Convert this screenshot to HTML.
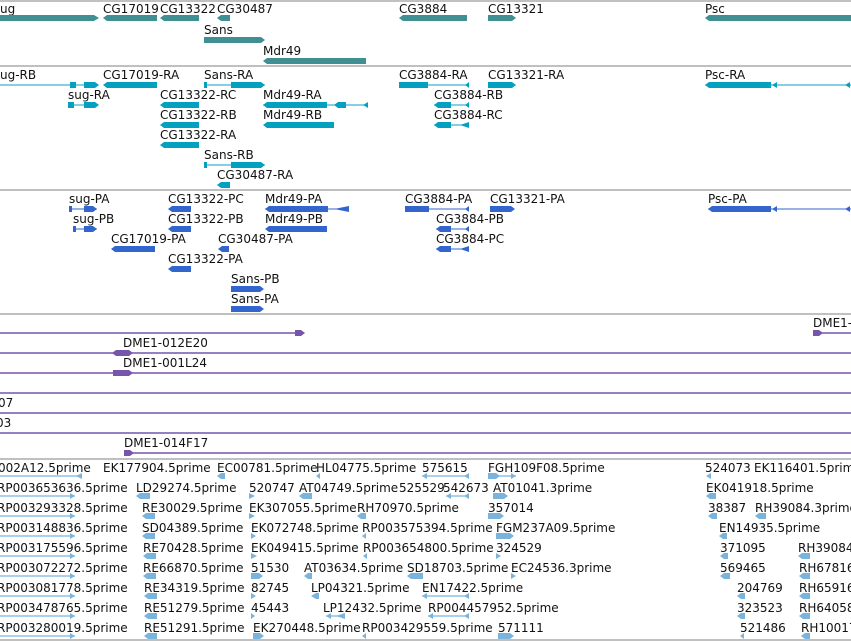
<!DOCTYPE html>
<html><head><meta charset="utf-8"><style>
html,body{margin:0;padding:0;background:#fff;width:851px;height:642px;overflow:hidden}
svg{display:block}
text{font-family:"DejaVu Sans","Liberation Sans",sans-serif;font-size:12px;fill:#111}
.g{fill:#3f8f93}.t{fill:#04a0c0}.p{fill:#3366cc}.v{fill:#7755aa}.e{fill:#7ab4dc}
.tl{stroke:#04a0c0;stroke-width:1}.pl{stroke:#3366cc;stroke-width:1}.vl{stroke:#7755aa;stroke-width:1.5}.el{stroke:#7ab4dc;stroke-width:1.3}
.sep{stroke:#c0c0c0;stroke-width:2}
</style></head><body>
<svg width="851" height="642" xmlns="http://www.w3.org/2000/svg">
<line class="sep" x1="0" y1="1" x2="851" y2="1"/>
<line class="sep" x1="0" y1="66" x2="851" y2="66"/>
<line class="sep" x1="0" y1="190" x2="851" y2="190"/>
<line class="sep" x1="0" y1="314" x2="851" y2="314"/>
<line class="sep" x1="0" y1="459" x2="851" y2="459"/>
<line class="sep" x1="0" y1="640" x2="851" y2="640"/>

<!-- Track 1 genes -->
<text x="0" y="13">ug</text><polygon class="g" points="0,15 94,15 99,18 94,21 0,21"/>
<text x="103" y="13">CG17019</text><polygon class="g" points="103,18 107,15 157,15 157,21 107,21"/>
<text x="160" y="13">CG13322</text><polygon class="g" points="160,18 164,15 199,15 199,21 164,21"/>
<text x="217" y="13">CG30487</text><polygon class="g" points="217,18 221,15 230,15 230,21 221,21"/>
<text x="204" y="34">Sans</text><polygon class="g" points="204,37 261,37 265,40 261,43 204,43"/>
<text x="263" y="55">Mdr49</text><polygon class="g" points="263,61 267,58 366,58 366,64 267,64"/>
<text x="399" y="13">CG3884</text><polygon class="g" points="399,18 403,15 467,15 467,21 403,21"/>
<text x="488" y="13">CG13321</text><polygon class="g" points="488,15 512,15 516,18 512,21 488,21"/>
<text x="705" y="13">Psc</text><polygon class="g" points="705,18 709,15 851,15 851,21 709,21"/>

<!-- Track 2 transcripts -->
<text x="0" y="79">ug-RB</text><line class="tl" x1="0" y1="85" x2="98" y2="85"/><rect class="t" x="70" y="82" width="6" height="6"/><polygon class="t" points="84,82 95,82 99,85 95,88 84,88"/>
<text x="103" y="79">CG17019-RA</text><polygon class="t" points="103,85 107,82 157,82 157,88 107,88"/>
<text x="204" y="79">Sans-RA</text><line class="tl" x1="204" y1="85" x2="265" y2="85"/><rect class="t" x="204" y="82" width="3" height="6"/><polygon class="t" points="231,82 261,82 265,85 261,88 231,88"/>
<text x="399" y="79">CG3884-RA</text><line class="tl" x1="399" y1="85" x2="469" y2="85"/><rect class="t" x="399" y="82" width="29" height="6"/><polygon class="t" points="465,85 469,82 469,88"/>
<text x="488" y="79">CG13321-RA</text><polygon class="t" points="488,82 512,82 516,85 512,88 488,88"/>
<text x="705" y="79">Psc-RA</text><line class="tl" x1="705" y1="85" x2="851" y2="85"/><polygon class="t" points="705,85 709,82 771,82 771,88 709,88"/><polygon class="t" points="772,85 777,82 777,88"/><polygon class="t" points="845,85 850,82 850,88"/>

<text x="68" y="99">sug-RA</text><line class="tl" x1="68" y1="105" x2="98" y2="105"/><rect class="t" x="68" y="102" width="6" height="6"/><polygon class="t" points="84,102 95,102 99,105 95,108 84,108"/>
<text x="160" y="99">CG13322-RC</text><polygon class="t" points="160,105 164,102 199,102 199,108 164,108"/>
<text x="263" y="99">Mdr49-RA</text><line class="tl" x1="263" y1="105" x2="368" y2="105"/><polygon class="t" points="263,105 267,102 327,102 327,108 267,108"/><polygon class="t" points="334,105 338,102 346,102 346,108 338,108"/><polygon class="t" points="363,105 368,102 368,108"/>
<text x="434" y="99">CG3884-RB</text><line class="tl" x1="434" y1="105" x2="469" y2="105"/><polygon class="t" points="434,105 438,102 451,102 451,108 438,108"/><polygon class="t" points="465,105 469,102 469,108"/>

<text x="160" y="119">CG13322-RB</text><polygon class="t" points="160,125 164,122 199,122 199,128 164,128"/>
<text x="263" y="119">Mdr49-RB</text><polygon class="t" points="263,125 267,122 334,122 334,128 267,128"/>
<text x="434" y="119">CG3884-RC</text><line class="tl" x1="434" y1="125" x2="469" y2="125"/><polygon class="t" points="434,125 438,122 451,122 451,128 438,128"/><polygon class="t" points="460,125 469,122 469,128"/>
<text x="160" y="139">CG13322-RA</text><polygon class="t" points="160,145 164,142 199,142 199,148 164,148"/>
<text x="204" y="159">Sans-RB</text><line class="tl" x1="204" y1="165" x2="265" y2="165"/><rect class="t" x="204" y="162" width="3" height="6"/><polygon class="t" points="231,162 261,162 265,165 261,168 231,168"/>
<text x="217" y="179">CG30487-RA</text><polygon class="t" points="217,185 221,182 230,182 230,188 221,188"/>

<!-- Track 3 proteins -->
<text x="69" y="203">sug-PA</text><line class="pl" x1="69" y1="209" x2="97" y2="209"/><rect class="p" x="69" y="206" width="3" height="6"/><polygon class="p" points="84,206 93,206 97,209 93,212 84,212"/>
<text x="168" y="203">CG13322-PC</text><polygon class="p" points="168,209 172,206 191,206 191,212 172,212"/>
<text x="265" y="203">Mdr49-PA</text><line class="pl" x1="265" y1="209" x2="349" y2="209"/><polygon class="p" points="265,209 269,206 328,206 328,212 269,212"/><polygon class="p" points="334,209 349,206 349,212"/>
<text x="405" y="203">CG3884-PA</text><line class="pl" x1="405" y1="209" x2="469" y2="209"/><rect class="p" x="405" y="206" width="24" height="6"/><polygon class="p" points="465,209 469,206 469,212"/>
<text x="490" y="203">CG13321-PA</text><polygon class="p" points="490,206 511,206 515,209 511,212 490,212"/>
<text x="708" y="203">Psc-PA</text><line class="pl" x1="708" y1="209" x2="851" y2="209"/><polygon class="p" points="708,209 712,206 771,206 771,212 712,212"/><polygon class="p" points="772,209 777,206 777,212"/><polygon class="p" points="845,209 850,206 850,212"/>

<text x="73" y="223">sug-PB</text><line class="pl" x1="73" y1="229" x2="97" y2="229"/><rect class="p" x="73" y="226" width="3" height="6"/><polygon class="p" points="84,226 93,226 97,229 93,232 84,232"/>
<text x="168" y="223">CG13322-PB</text><polygon class="p" points="168,229 172,226 191,226 191,232 172,232"/>
<text x="265" y="223">Mdr49-PB</text><polygon class="p" points="265,229 269,226 327,226 327,232 269,232"/>
<text x="436" y="223">CG3884-PB</text><line class="pl" x1="436" y1="229" x2="469" y2="229"/><polygon class="p" points="436,229 440,226 451,226 451,232 440,232"/><polygon class="p" points="465,229 469,226 469,232"/>

<text x="111" y="243">CG17019-PA</text><polygon class="p" points="111,249 115,246 155,246 155,252 115,252"/>
<text x="218" y="243">CG30487-PA</text><polygon class="p" points="218,249 222,246 229,246 229,252 222,252"/>
<text x="436" y="243">CG3884-PC</text><line class="pl" x1="436" y1="249" x2="469" y2="249"/><polygon class="p" points="436,249 440,246 451,246 451,252 440,252"/><polygon class="p" points="460,249 469,246 469,252"/>
<text x="168" y="263">CG13322-PA</text><polygon class="p" points="168,269 172,266 191,266 191,272 172,272"/>
<text x="231" y="283">Sans-PB</text><polygon class="p" points="231,286 260,286 264,289 260,292 231,292"/>
<text x="231" y="303">Sans-PA</text><polygon class="p" points="231,306 260,306 264,309 260,312 231,312"/>

<!-- purple clones -->
<line class="vl" x1="0" y1="333" x2="300" y2="333"/><polygon class="v" points="295,330 301,330 305,333 301,336 295,336"/>
<text x="813" y="327">DME1-</text><line class="vl" x1="813" y1="333" x2="851" y2="333"/><polygon class="v" points="813,330 819,330 823,333 819,336 813,336"/>
<line class="vl" x1="0" y1="353" x2="851" y2="353"/><text x="123" y="347">DME1-012E20</text><polygon class="v" points="112,353 116,350 129,350 133,353 129,356 116,356"/>
<line class="vl" x1="0" y1="373" x2="851" y2="373"/><text x="123" y="367">DME1-001L24</text><polygon class="v" points="113,370 129,370 133,373 129,376 113,376"/>
<line class="vl" x1="0" y1="393" x2="851" y2="393"/><text x="-2" y="407">07</text>
<line class="vl" x1="0" y1="413" x2="851" y2="413"/><text x="-4" y="427">03</text>
<line class="vl" x1="0" y1="433" x2="851" y2="433"/>
<text x="124" y="447">DME1-014F17</text><line class="vl" x1="124" y1="453" x2="851" y2="453"/><polygon class="v" points="124,450 130,450 134,453 130,456 124,456"/>

<!-- ESTs -->
<g>
<text x="-2" y="472">002A12.5prime</text><line class="el" x1="0" y1="476" x2="82" y2="476"/><polygon class="e" points="76,476 82,473 82,479"/>
<text x="103" y="472">EK177904.5prime</text>
<text x="217" y="472">EC00781.5prime</text><polygon class="e" points="217,476 221,473 225,473 225,479 221,479"/>
<text x="316" y="472">HL04775.5prime</text><polygon class="e" points="316,476 320,473 320,479"/>
<text x="422" y="472">575615</text><line class="el" x1="422" y1="476" x2="469" y2="476"/><polygon class="e" points="427,473 427,479 422,476"/><polygon class="e" points="464,476 469,473 469,479"/>
<text x="488" y="472">FGH109F08.5prime</text><line class="el" x1="488" y1="476" x2="516" y2="476"/><polygon class="e" points="488,473 496,473 500,476 496,479 488,479"/><polygon class="e" points="511,473 516,476 511,479"/>
<text x="705" y="472">524073</text><polygon class="e" points="706,476 711,473 711,479"/>
<text x="754" y="472">EK116401.5prime</text>

<text x="-3" y="492">RP003653636.5prime</text><line class="el" x1="0" y1="496" x2="75" y2="496"/><polygon class="e" points="70,493 75,496 70,499"/>
<text x="136" y="492">LD29274.5prime</text><polygon class="e" points="136,496 140,493 150,493 150,499 140,499"/>
<text x="249" y="492">520747</text><polygon class="e" points="249,493 255,496 249,499"/>
<text x="299" y="492">AT04749.5prime</text><polygon class="e" points="299,496 303,493 312,493 312,499 303,499"/>
<text x="399" y="492">525529</text><text x="443" y="492">542673</text><line class="el" x1="446" y1="496" x2="469" y2="496"/><polygon class="e" points="446,496 451,493 451,499"/><polygon class="e" points="464,496 469,493 469,499"/>
<text x="493" y="492">AT01041.3prime</text><polygon class="e" points="493,493 504,493 508,496 504,499 493,499"/>
<text x="706" y="492">EK041918.5prime</text><polygon class="e" points="706,496 710,493 716,493 716,499 710,499"/>

<text x="-3" y="512">RP003293328.5prime</text><line class="el" x1="0" y1="516" x2="75" y2="516"/><polygon class="e" points="70,513 75,516 70,519"/>
<text x="142" y="512">RE30029.5prime</text><polygon class="e" points="142,516 146,513 155,513 155,519 146,519"/>
<text x="249" y="512">EK307055.5prime</text><polygon class="e" points="249,513 255,516 249,519"/>
<text x="357" y="512">RH70970.5prime</text><polygon class="e" points="357,516 361,513 366,513 366,519 361,519"/>
<text x="488" y="512">357014</text><polygon class="e" points="488,513 500,513 504,516 500,519 488,519"/>
<text x="708" y="512">38387</text><polygon class="e" points="708,516 712,513 717,513 717,519 712,519"/>
<text x="755" y="512">RH39084.3prime</text><polygon class="e" points="755,516 759,513 766,513 766,519 759,519"/>

<text x="-3" y="532">RP003148836.5prime</text><line class="el" x1="0" y1="536" x2="75" y2="536"/><polygon class="e" points="70,533 75,536 70,539"/>
<text x="142" y="532">SD04389.5prime</text><polygon class="e" points="142,536 146,533 155,533 155,539 146,539"/>
<text x="251" y="532">EK072748.5prime</text><polygon class="e" points="251,533 256,536 251,539"/>
<text x="362" y="532">RP003575394.5prime</text><polygon class="e" points="362,536 366,533 366,539"/>
<text x="496" y="532">FGM237A09.5prime</text><polygon class="e" points="496,533 510,533 514,536 510,539 496,539"/>
<text x="719" y="532">EN14935.5prime</text><polygon class="e" points="719,536 723,533 727,533 727,539 723,539"/>

<text x="-3" y="552">RP003175596.5prime</text><line class="el" x1="0" y1="556" x2="75" y2="556"/><polygon class="e" points="70,553 75,556 70,559"/>
<text x="143" y="552">RE70428.5prime</text><polygon class="e" points="143,556 147,553 156,553 156,559 147,559"/>
<text x="251" y="552">EK049415.5prime</text><polygon class="e" points="251,553 257,556 251,559"/>
<text x="363" y="552">RP003654800.5prime</text><polygon class="e" points="363,556 367,553 367,559"/>
<text x="496" y="552">324529</text><polygon class="e" points="496,553 501,556 496,559"/>
<text x="720" y="552">371095</text><polygon class="e" points="720,556 724,553 728,553 728,559 724,559"/>
<text x="798" y="552">RH39084</text><polygon class="e" points="798,556 802,553 810,553 810,559 802,559"/>

<text x="-3" y="572">RP003072272.5prime</text><line class="el" x1="0" y1="576" x2="75" y2="576"/><polygon class="e" points="70,573 75,576 70,579"/>
<text x="143" y="572">RE66870.5prime</text><polygon class="e" points="143,576 147,573 156,573 156,579 147,579"/>
<text x="251" y="572">51530</text><polygon class="e" points="251,573 259,573 263,576 259,579 251,579"/>
<text x="304" y="572">AT03634.5prime</text><polygon class="e" points="304,576 308,573 312,573 312,579 308,579"/>
<text x="407" y="572">SD18703.5prime</text><polygon class="e" points="407,576 411,573 423,573 423,579 411,579"/>
<text x="511" y="572">EC24536.3prime</text><polygon class="e" points="511,573 516,576 511,579"/>
<text x="720" y="572">569465</text><polygon class="e" points="720,576 724,573 730,573 730,579 724,579"/>
<text x="799" y="572">RH67816</text><polygon class="e" points="799,576 803,573 810,573 810,579 803,579"/>

<text x="-3" y="592">RP003081778.5prime</text><line class="el" x1="0" y1="596" x2="75" y2="596"/><polygon class="e" points="70,593 75,596 70,599"/>
<text x="144" y="592">RE34319.5prime</text><polygon class="e" points="144,596 148,593 157,593 157,599 148,599"/>
<text x="251" y="592">82745</text><polygon class="e" points="251,593 256,596 251,599"/>
<text x="311" y="592">LP04321.5prime</text><polygon class="e" points="311,596 316,593 319,593 319,599 316,599"/>
<text x="422" y="592">EN17422.5prime</text><line class="el" x1="422" y1="596" x2="469" y2="596"/><polygon class="e" points="422,596 427,593 427,599"/><polygon class="e" points="464,596 469,593 469,599"/>
<text x="737" y="592">204769</text><polygon class="e" points="737,596 741,593 745,593 745,599 741,599"/>
<text x="799" y="592">RH65916</text><polygon class="e" points="799,596 803,593 810,593 810,599 803,599"/>

<text x="-3" y="612">RP003478765.5prime</text><line class="el" x1="0" y1="616" x2="75" y2="616"/><polygon class="e" points="70,613 75,616 70,619"/>
<text x="144" y="612">RE51279.5prime</text><polygon class="e" points="144,616 148,613 157,613 157,619 148,619"/>
<text x="251" y="612">45443</text><polygon class="e" points="251,613 255,616 251,619"/>
<text x="323" y="612">LP12432.5prime</text><line class="el" x1="326" y1="616" x2="345" y2="616"/><polygon class="e" points="326,616 331,613 331,619"/><polygon class="e" points="336,616 345,613 345,619"/>
<text x="428" y="612">RP004457952.5prime</text><line class="el" x1="428" y1="616" x2="469" y2="616"/><polygon class="e" points="428,616 433,613 433,619"/><polygon class="e" points="464,616 469,613 469,619"/>
<text x="737" y="612">323523</text><polygon class="e" points="737,616 741,613 745,613 745,619 741,619"/>
<text x="799" y="612">RH64058</text><polygon class="e" points="799,616 803,613 810,613 810,619 803,619"/>

<text x="-3" y="632">RP003280019.5prime</text><line class="el" x1="0" y1="636" x2="75" y2="636"/><polygon class="e" points="70,633 75,636 70,639"/>
<text x="144" y="632">RE51291.5prime</text><polygon class="e" points="144,636 148,633 157,633 157,639 148,639"/>
<text x="253" y="632">EK270448.5prime</text><polygon class="e" points="253,633 260,633 264,636 260,639 253,639"/>
<text x="362" y="632">RP003429559.5prime</text><polygon class="e" points="362,636 366,633 366,639"/>
<text x="498" y="632">571111</text><polygon class="e" points="498,633 510,633 514,636 510,639 498,639"/>
<text x="740" y="632">521486</text><polygon class="e" points="740,636 744,633 744,639"/>
<text x="801" y="632">RH10017</text><polygon class="e" points="801,636 805,633 810,633 810,639 805,639"/>
</g>
</svg>
</body></html>
